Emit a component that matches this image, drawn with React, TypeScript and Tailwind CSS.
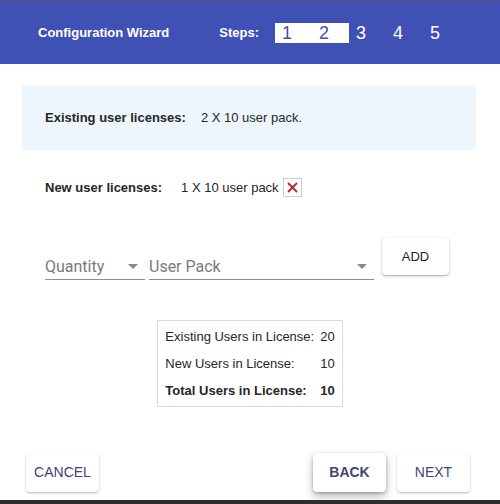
import React from 'react'

const arial = { fontFamily: '"Liberation Sans", Arial, sans-serif' }
const roboto = { fontFamily: 'Roboto, "Liberation Sans", sans-serif' }

const steps = [1, 2, 3, 4, 5]
const activeSteps = 2

const DropArrow = () => (
  <svg width="24" height="24" viewBox="0 0 24 24" className="shrink-0 mt-[4px]">
    <path d="M7 10l5 5 5-5z" fill="#8a8a8a" />
  </svg>
)

const Select = ({ label, width }: { label: string; width: string }) => (
  <div className={`${width} h-[32px] mt-[10px] flex items-center justify-between border-b border-[#8f8f8f]`} style={roboto}>
    <span className="text-[16px] text-[#7a7a7a] leading-none pt-[6px]">{label}</span>
    <DropArrow />
  </div>
)

const summary = [
  { label: 'Existing Users in License:', value: 20, bold: false },
  { label: 'New Users in License:', value: 10, bold: false },
  { label: 'Total Users in License:', value: 10, bold: true },
]

const FooterButton = ({ text, strong }: { text: string; strong?: boolean }) => (
  <button
    className={`w-[73px] h-[39px] rounded bg-white text-[14px] text-[#3f4575] ${
      strong ? 'font-bold shadow-[0_4px_8px_rgba(0,0,0,0.3),0_1px_3px_rgba(0,0,0,0.2)]' : 'shadow-[0_1px_3px_rgba(0,0,0,0.2),0_1px_1px_rgba(0,0,0,0.1)]'
    }`}
  >
    {text}
  </button>
)

export default function App() {
  return (
    <div className="w-[500px] h-[504px] bg-white flex flex-col overflow-hidden text-[#262626]" style={arial}>
      <header className="h-[64px] shrink-0 bg-[#3f51b5] border-t-2 border-[#4a5092] flex items-center text-white">
        <span className="ml-[38px] text-[13px] font-bold">Configuration Wizard</span>
        <span className="ml-[50px] text-[13px] font-bold">Steps:</span>
        <div className="ml-[16px] flex items-center">
          <div className="flex h-[20px] bg-white items-center">
            {steps.slice(0, activeSteps).map((s) => (
              <span key={s} className="w-[37px] pl-[7px] text-[18px] leading-none text-[#3f51b5]">
                {s}
              </span>
            ))}
          </div>
          {steps.slice(activeSteps).map((s) => (
            <span key={s} className="w-[37px] pl-[7px] text-[18px] leading-none">
              {s}
            </span>
          ))}
        </div>
      </header>

      <div className="mt-[21px] ml-[22px] w-[454px] h-[65px] bg-[#eef6fd] flex items-center pl-[23px] text-[13px]">
        <span className="font-bold">Existing user licenses:</span>
        <span className="ml-[15px]">2 X 10 user pack.</span>
      </div>

      <div className="mt-[28px] ml-[45px] h-[19px] flex items-center text-[13px]">
        <span className="font-bold">New user licenses:</span>
        <span className="ml-[19px]">1 X 10 user pack</span>
        <span className="ml-[4px] w-[19px] h-[19px] border border-[#cfcfcf] flex items-center justify-center">
          <svg width="11" height="11" viewBox="0 0 11 11">
            <path d="M1 1L10 10M10 1L1 10" stroke="#b3262b" strokeWidth="1.8" />
          </svg>
        </span>
      </div>

      <div className="mt-[41px] ml-[45px] flex items-start">
        <Select label="Quantity" width="w-[100px]" />
        <div className="ml-[4px]">
          <Select label="User Pack" width="w-[225px]" />
        </div>
        <button className="ml-[8px] w-[67px] h-[37px] rounded bg-white text-[13px] text-[#222] shadow-[0_1px_3px_rgba(0,0,0,0.25),0_1px_1px_rgba(0,0,0,0.12)]">
          ADD
        </button>
      </div>

      <div className="mt-[40px] mx-auto border border-[#dcdcdc] px-[7px] py-[2px] text-[13px]">
        <table>
          <tbody>
            {summary.map((r) => (
              <tr key={r.label} className={`h-[27px] ${r.bold ? 'font-bold' : ''}`}>
                <td className="pr-[6px] whitespace-nowrap">{r.label}</td>
                <td>{r.value}</td>
              </tr>
            ))}
          </tbody>
        </table>
      </div>

      <div className="mt-[46px] flex items-center pl-[26px] pr-[30px]">
        <FooterButton text="CANCEL" />
        <div className="ml-auto flex gap-[11px]">
          <FooterButton text="BACK" strong />
          <FooterButton text="NEXT" />
        </div>
      </div>

      <div className="mt-auto h-[4px] bg-[#2e2e2e] shrink-0" />
    </div>
  )
}
